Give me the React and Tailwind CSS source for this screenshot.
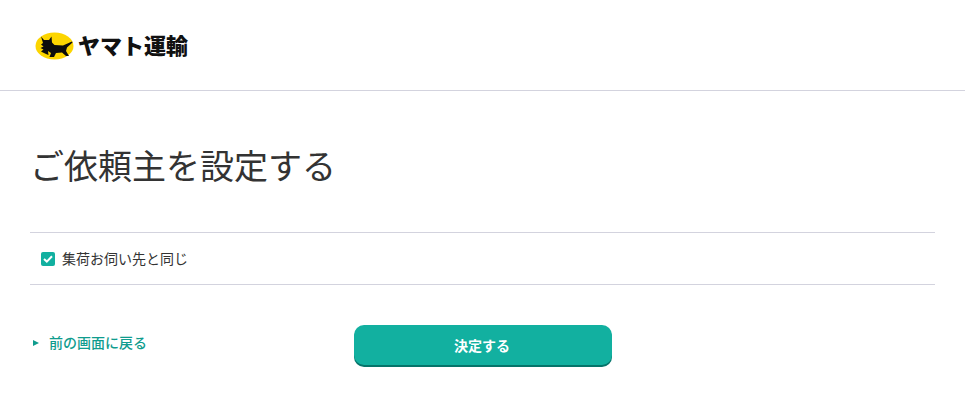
const jp = "font-['Noto_Sans_CJK_JP',sans-serif]";

function Logo() {
    return (
        <div className="flex items-center">
            <svg width="39" height="28" viewBox="0 0 39 28" className="mr-[4px]">
                <ellipse cx="19.5" cy="14" rx="19" ry="13.5" fill="#fcd500" />
                <path
                    d="M6 4.5 L9 8 L14 8 L16.5 4.5 L17 10.5 L19.5 13 L28 13.5 L37 9.5 L37.5 10.5 L32 15.5 L31 19 L34 24 L31 24 L27 20.5 L21 21 L19 25 L14.5 25 L16 21 L13 19 L13.5 23 L11 22 L6 19.5 L8.5 17.5 L5.5 16 L8.5 14.5 L6 12.5 L8 11 Z"
                    fill="#0c0c0c"
                />
            </svg>
            <span className={`${jp} text-[22px] leading-none font-black text-[#111] mt-[-5px]`}>ヤマト運輸</span>
        </div>
    );
}

export default function App() {
    return (
        <div className={`${jp} bg-white h-[400px] w-[965px] overflow-hidden text-[#333]`}>
            <header className="h-[91px] border-b border-[#d3d3de] pl-[35px] pt-[32px]">
                <Logo />
            </header>

            <main className="px-[30px]">
                <h1 className="mt-[49px] text-[34px] leading-[50px] font-normal text-[#333]">ご依頼主を設定する</h1>

                <div className="mt-[42px] h-[53px] border-y border-[#d3d3de] flex items-center pl-[11px]">
                    <label className="flex items-center">
                        <span className="w-[14px] h-[14px] rounded-[2px] bg-[#12b0a0] flex items-center justify-center mr-[7px]">
                            <svg width="10" height="8" viewBox="0 0 10 8">
                                <path d="M1 4 L3.8 6.6 L9 1.2" fill="none" stroke="#fff" strokeWidth="2" />
                            </svg>
                        </span>
                        <span className="text-[14px] leading-none mt-[-2px]">集荷お伺い先と同じ</span>
                    </label>
                </div>

                <div className="mt-[40px] flex items-start">
                    <a className="w-[324px] flex items-center pl-[3px] pt-[9px] text-[14px] leading-[16px] font-medium text-[#0f9c8e]">
                        <span className="w-0 h-0 border-y-[3.5px] border-y-transparent border-l-[6px] border-l-[#0f9c8e] mr-[10px] mt-[2px]" />
                        前の画面に戻る
                    </a>
                    <button className="w-[258px] h-[40px] rounded-[10px] bg-[#12b0a0] shadow-[0_2px_0_#05746a] text-white text-[14px] font-bold pr-[2px]">
                        決定する
                    </button>
                </div>
            </main>
        </div>
    );
}
